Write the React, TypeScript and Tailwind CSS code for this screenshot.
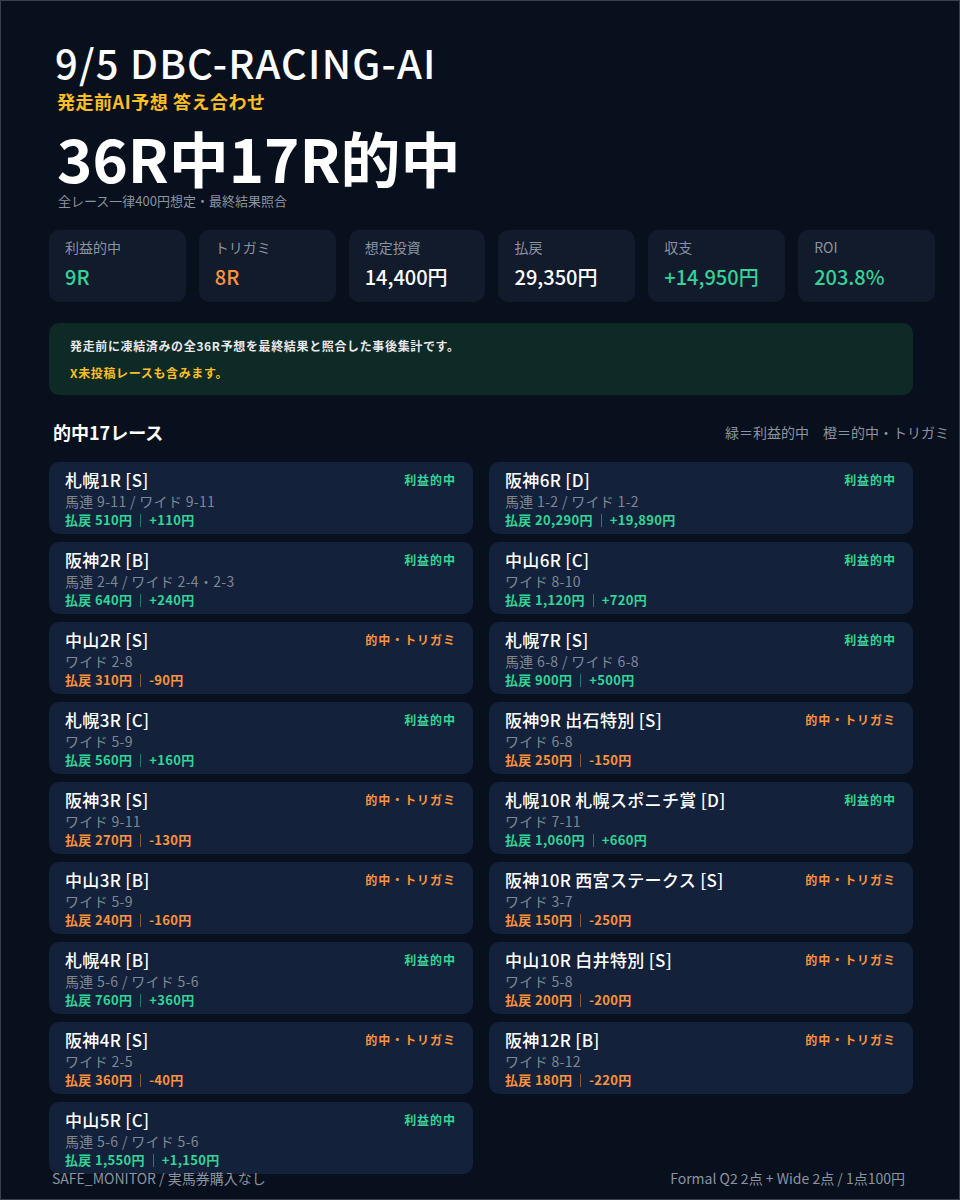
const F = { fontFamily: '"Noto Sans CJK JP", "Noto Sans", sans-serif' };

type Race = { name: string; bets: string; pay: string; diff: string; win: boolean };

const left: Race[] = [
  { name: '札幌1R [S]', bets: '馬連 9-11 / ワイド 9-11', pay: '510円', diff: '+110円', win: true },
  { name: '阪神2R [B]', bets: '馬連 2-4 / ワイド 2-4・2-3', pay: '640円', diff: '+240円', win: true },
  { name: '中山2R [S]', bets: 'ワイド 2-8', pay: '310円', diff: '-90円', win: false },
  { name: '札幌3R [C]', bets: 'ワイド 5-9', pay: '560円', diff: '+160円', win: true },
  { name: '阪神3R [S]', bets: 'ワイド 9-11', pay: '270円', diff: '-130円', win: false },
  { name: '中山3R [B]', bets: 'ワイド 5-9', pay: '240円', diff: '-160円', win: false },
  { name: '札幌4R [B]', bets: '馬連 5-6 / ワイド 5-6', pay: '760円', diff: '+360円', win: true },
  { name: '阪神4R [S]', bets: 'ワイド 2-5', pay: '360円', diff: '-40円', win: false },
  { name: '中山5R [C]', bets: '馬連 5-6 / ワイド 5-6', pay: '1,550円', diff: '+1,150円', win: true },
];
const right: Race[] = [
  { name: '阪神6R [D]', bets: '馬連 1-2 / ワイド 1-2', pay: '20,290円', diff: '+19,890円', win: true },
  { name: '中山6R [C]', bets: 'ワイド 8-10', pay: '1,120円', diff: '+720円', win: true },
  { name: '札幌7R [S]', bets: '馬連 6-8 / ワイド 6-8', pay: '900円', diff: '+500円', win: true },
  { name: '阪神9R 出石特別 [S]', bets: 'ワイド 6-8', pay: '250円', diff: '-150円', win: false },
  { name: '札幌10R 札幌スポニチ賞 [D]', bets: 'ワイド 7-11', pay: '1,060円', diff: '+660円', win: true },
  { name: '阪神10R 西宮ステークス [S]', bets: 'ワイド 3-7', pay: '150円', diff: '-250円', win: false },
  { name: '中山10R 白井特別 [S]', bets: 'ワイド 5-8', pay: '200円', diff: '-200円', win: false },
  { name: '阪神12R [B]', bets: 'ワイド 8-12', pay: '180円', diff: '-220円', win: false },
];

const stats = [
  { label: '利益的中', value: '9R', cls: 'text-[#34d399]' },
  { label: 'トリガミ', value: '8R', cls: 'text-[#fb923c]' },
  { label: '想定投資', value: '14,400円', cls: 'text-white' },
  { label: '払戻', value: '29,350円', cls: 'text-white' },
  { label: '収支', value: '+14,950円', cls: 'text-[#34d399]' },
  { label: 'ROI', value: '203.8%', cls: 'text-[#34d399]' },
];

function Card({ r }: { r: Race }) {
  const c = r.win ? 'text-[#34d399]' : 'text-[#fb923c]';
  return (
    <div className="h-[72px] rounded-[10px] bg-[#13223a] pl-4 pr-[17px] pt-[6px] tracking-[0.02em]">
      <div className="flex items-center justify-between">
        <span className="text-[17px] font-medium text-white leading-[24px]">{r.name}</span>
        <span className={`text-[12px] font-bold tracking-[0.08em] ${c}`}>{r.win ? '利益的中' : '的中・トリガミ'}</span>
      </div>
      <div className="text-[14px] text-[#7d8796] leading-[19px]">{r.bets}</div>
      <div className={`flex items-center text-[13px] font-bold leading-[18px] ${c}`}>
        <span>払戻 {r.pay}</span>
        <span className="mx-2 h-[13px] w-px bg-current opacity-50" />
        <span>{r.diff}</span>
      </div>
    </div>
  );
}

export default function App() {
  return (
    <div style={F} className="w-[960px] h-[1200px] overflow-hidden bg-[#09101d] border border-[#3a3f48] pl-12 pr-6 pt-[36px]">
      <h1 className="text-[40px] font-medium text-white leading-[50px] pl-[6px] tracking-[0.03em]">9/5 DBC-RACING-AI</h1>
      <div className="text-[18px] font-bold text-[#fbbf24] leading-[28px] pl-[8px] tracking-[0.03em]">発走前AI予想 答え合わせ</div>
      <div className="mt-[8px] text-[60px] font-bold text-white leading-[68px] pl-[8px]">36R中17R的中</div>
      <div className="text-[13px] text-[#8a93a0] leading-[18px] pl-[9px] mt-[1px]">全レース一律400円想定・最終結果照合</div>
      <div className="mt-[20px] flex gap-[13px]">
        {stats.map(s => (
          <div key={s.label} className="w-[137px] h-[72px] rounded-[10px] bg-[#111b2c] pl-4 pt-[7px]">
            <div className="text-[14px] text-[#8a93a0] leading-[20px]">{s.label}</div>
            <div className={`mt-[6px] text-[20px] font-medium leading-[28px] ${s.cls}`}>{s.value}</div>
          </div>
        ))}
      </div>
      <div className="mt-[21px] w-[864px] h-[72px] rounded-[10px] bg-[#0e2a27] pl-[21px] pt-[14px] tracking-[0.04em]">
        <div className="text-[12px] font-bold text-[#e5e7eb] leading-[18px]">発走前に凍結済みの全36R予想を最終結果と照合した事後集計です。</div>
        <div className="mt-[9px] text-[12px] font-bold text-[#fbbf24] leading-[18px]">X未投稿レースも含みます。</div>
      </div>
      <div className="mt-[24px] flex items-center justify-between h-[26px]">
        <span className="text-[18px] font-bold text-white pl-[4px]">的中17レース</span>
        <span className="text-[14px] text-[#8a93a0] whitespace-nowrap -mr-[14px]">緑＝利益的中　橙＝的中・トリガミ</span>
      </div>
      <div className="mt-[17px] w-[864px] grid grid-cols-2 gap-x-4 items-start">
        <div className="flex flex-col gap-2">{left.map(r => <Card key={r.name} r={r} />)}</div>
        <div className="flex flex-col gap-2">{right.map(r => <Card key={r.name} r={r} />)}</div>
      </div>
      <div className="-mt-[6px] w-[856px] flex justify-between text-[14px] text-[#8a93a0] leading-[20px] pl-[3px]">
        <span>SAFE_MONITOR / 実馬券購入なし</span>
        <span>Formal Q2 2点 + Wide 2点 / 1点100円</span>
      </div>
    </div>
  );
}
